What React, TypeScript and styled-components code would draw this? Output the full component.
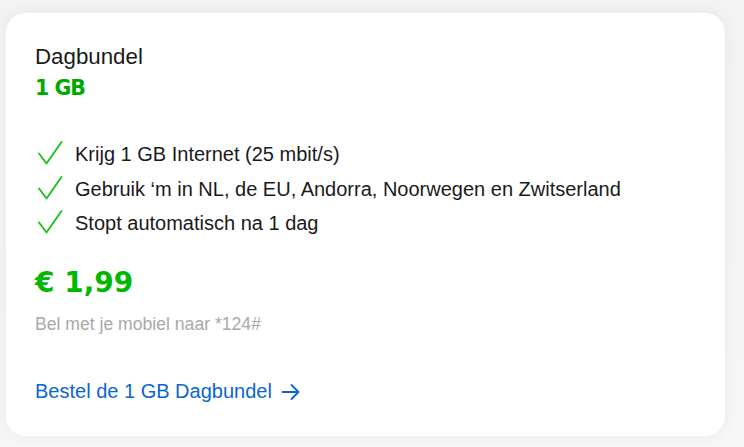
import React from "react";
import styled, { createGlobalStyle } from "styled-components";

const Global = createGlobalStyle`
  html, body { margin: 0; padding: 0; background: #f4f4f4; }
  body { font-family: "Liberation Sans", Arial, sans-serif; }
`;

const Page = styled.div`
  width: 744px;
  height: 447px;
  box-sizing: border-box;
  padding: 13px 19px 11px 6px;
  background: linear-gradient(180deg, #f3f3f3 0%, #f7f7f7 100%);
`;

const Card = styled.section`
  box-sizing: border-box;
  height: 100%;
  background: #ffffff;
  border-radius: 20px;
  box-shadow: 0 0 18px rgba(0, 0, 0, 0.06);
  padding: 31px 29px 0 29px;
  display: flex;
  flex-direction: column;
`;

const Title = styled.div`
  font-size: 22.3px;
  line-height: 26px;
  color: #1a1a1a;
`;

const Volume = styled.div`
  margin-top: 5px;
  font-family: "DejaVu Sans", "Liberation Sans", sans-serif;
  font-size: 20.5px;
  line-height: 26px;
  font-weight: 700;
  color: #00a900;
  letter-spacing: -1px;
`;

const Features = styled.ul`
  list-style: none;
  margin: 36px 0 0 0;
  padding: 0;
  display: flex;
  flex-direction: column;
`;

const Feature = styled.li`
  display: flex;
  align-items: center;
  gap: 12px;
  height: 34.5px;
  line-height: 34.5px;
  font-size: 20px;
  color: #1a1a1a;
  margin-left: 3px;
`;

const CheckBox = styled.svg`
  flex: none;
  width: 25px;
  height: 24px;
  margin-top: -2px;
`;

const Check = () => (
  <CheckBox viewBox="0 0 25 24" fill="none">
    <path d="M1 12.5 L8.5 22.5 L23.5 1" stroke="#1fc21f" strokeWidth="1.9" strokeLinecap="round" strokeLinejoin="round" />
  </CheckBox>
);

const Price = styled.div`
  margin-top: 25px;
  font-family: "DejaVu Sans", "Liberation Sans", sans-serif;
  font-size: 28px;
  line-height: 34px;
  font-weight: 700;
  color: #00b800;
`;

const Note = styled.div`
  margin-top: 13.5px;
  font-size: 17.6px;
  line-height: 22px;
  color: #a9a9a9;
`;

const Link = styled.a`
  margin-top: 44px;
  display: inline-flex;
  align-items: center;
  gap: 9px;
  font-size: 20px;
  line-height: 24px;
  color: #0a66d0;
  text-decoration: none;
  align-self: flex-start;
`;

const ArrowBox = styled.svg`
  flex: none;
  width: 20px;
  height: 18px;
  margin-top: 2px;
`;

const Arrow = () => (
  <ArrowBox viewBox="0 0 20 18" fill="none">
    <path d="M1.5 9 H17.5 M10.5 2 L17.5 9 L10.5 16" stroke="#0a66d0" strokeWidth="1.8" strokeLinecap="round" strokeLinejoin="round" />
  </ArrowBox>
);

const features = [
  "Krijg 1 GB Internet (25 mbit/s)",
  "Gebruik \u2018m in NL, de EU, Andorra, Noorwegen en Zwitserland",
  "Stopt automatisch na 1 dag",
];

export default function App() {
  return (
    <>
      <Global />
      <Page>
        <Card>
          <Title>Dagbundel</Title>
          <Volume>1 GB</Volume>
          <Features>
            {features.map((f) => (
              <Feature key={f}>
                <Check />
                <span>{f}</span>
              </Feature>
            ))}
          </Features>
          <Price>€ 1,99</Price>
          <Note>Bel met je mobiel naar *124#</Note>
          <Link href="#">
            Bestel de 1 GB Dagbundel
            <Arrow />
          </Link>
        </Card>
      </Page>
    </>
  );
}
